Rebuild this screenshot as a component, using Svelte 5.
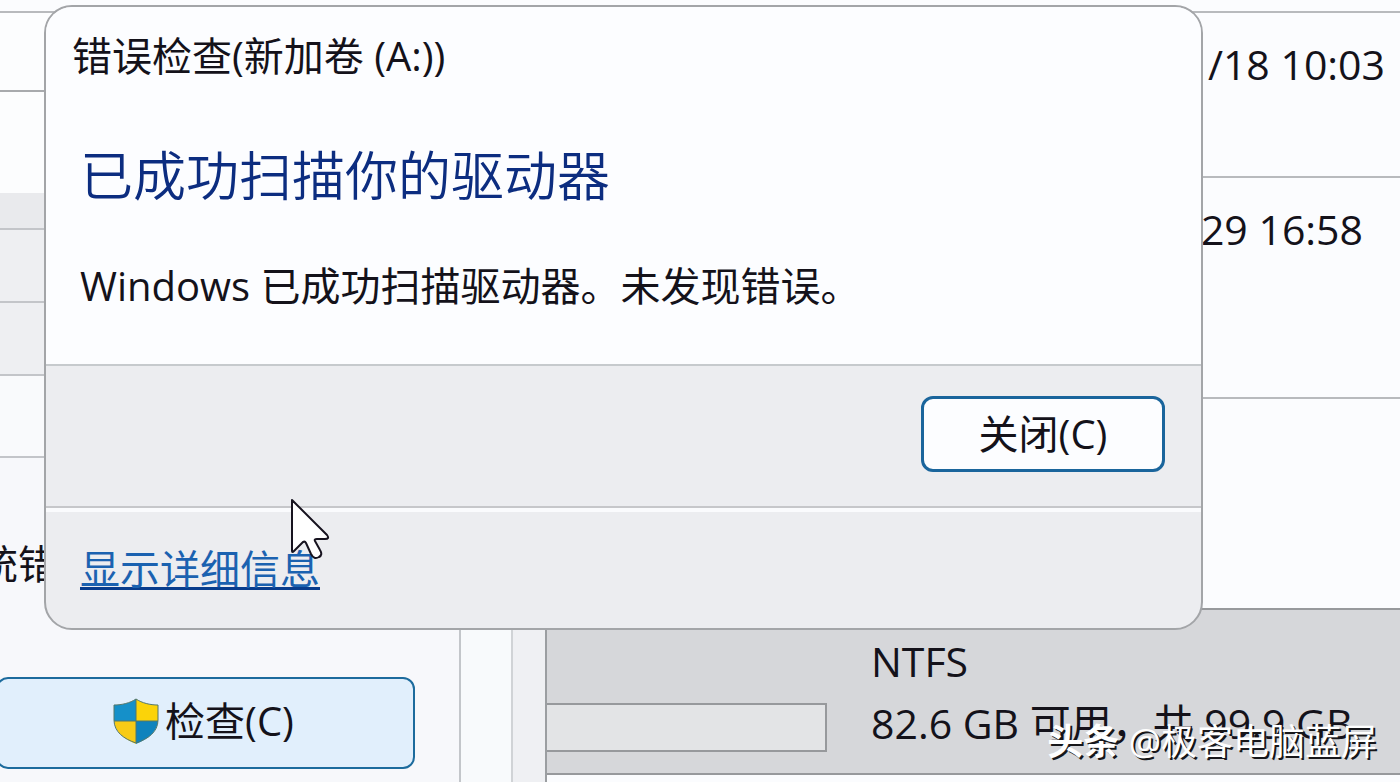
<script lang="ts">
  interface FileRow {
    modified: string;
    kind: string;
  }

  const files: FileRow[] = [
    { modified: '/18 10:03', kind: 'first' },
    { modified: '29 16:58', kind: 'second' },
  ];

  const bands = ['tabs', 'title', 'header', 'group', 'group', 'field'];

  let open = $state(true);
</script>

<main class="desktop">
  <div class="top-line"></div>
  <div class="windows">
    <section class="properties">
      <div class="page">
        {#each bands as band}
          <div class="band {band}"></div>
        {/each}
        <div class="check">
          <p>统错</p>
          <button type="button" class="check-button" onclick={() => (open = true)}>
            <svg class="shield" viewBox="0 0 46 46" aria-hidden="true">
              <path d="M23 1C17 5 9 7 1 7v16h22z" fill="#1590c9" />
              <path d="M23 1c6 4 14 6 22 6v16H23z" fill="#fbd309" />
              <path d="M1 23c1 11 10 18 22 23V23z" fill="#f8cb16" />
              <path d="M45 23c-1 11-10 18-22 23V23z" fill="#0f83bd" />
              <path
                d="M23 1C17 5 9 7 1 7v15c0 12 10 19 22 23 12-4 22-11 22-23V7C37 7 29 5 23 1zM23 1v44M1 23h44"
                fill="none"
                stroke="#53776a"
                stroke-width="1"
              />
            </svg>
            <span>检查(C)</span>
          </button>
        </div>
      </div>
      <div class="margin"></div>
      <div class="edge"></div>
    </section>

    <section class="explorer">
      {#each files as file}
        <div class="file {file.kind}">{file.modified}</div>
      {/each}
      <div class="blank"></div>
      <div class="drive">
        <div class="capacity"></div>
        <div class="info">
          <span>NTFS</span>
          <span>82.6 GB 可用，共 99.9 GB</span>
        </div>
      </div>
    </section>
  </div>

  {#if open}
    <div class="dialog" role="dialog" aria-labelledby="dialog-title">
      <div class="message">
        <div class="title" id="dialog-title">错误检查(新加卷 (A:))</div>
        <h1>已成功扫描你的驱动器</h1>
        <p>Windows 已成功扫描驱动器。未发现错误。</p>
      </div>
      <div class="actions">
        <button type="button" class="close" onclick={() => (open = false)}>关闭(C)</button>
      </div>
      <div class="details">
        <a href="#details">显示详细信息</a>
      </div>
    </div>
  {/if}

  <svg class="cursor" viewBox="0 0 40 62" aria-hidden="true">
    <path
      d="M2 2v51q0 2 2 0l9-9q2-1 3 1l5 11q3 6 8 3 4-2 1-7l-5-9q-1-2 2-2h8q5 0 2-4z"
      fill="#fff"
      stroke="#17131f"
      stroke-width="2"
      stroke-linejoin="round"
    />
  </svg>

  <div class="watermark"><b>头条</b> @极客电脑蓝屏</div>
</main>

<style>
  :global(body) {
    margin: 0;
  }

  .desktop {
    position: relative;
    display: flex;
    flex-direction: column;
    min-height: 100vh;
    overflow: hidden;
    background: #fbfcfe;
    color: #14121a;
    font-family: 'Open Sans', 'Noto Sans CJK SC', sans-serif;
    font-size: 40px;
    line-height: 52px;
  }

  .desktop *,
  .desktop {
    box-sizing: border-box;
  }

  p,
  h1 {
    margin: 0;
  }

  button {
    padding: 0;
    color: inherit;
    font-family: inherit;
    font-size: 40px;
    line-height: 52px;
  }

  .top-line {
    height: 13px;
    border-bottom: 2px solid #b8babd;
  }

  .windows {
    display: flex;
    flex: 1;
  }

  .properties {
    display: flex;
    flex: none;
    width: 545px;
  }

  .page {
    display: flex;
    flex: 1;
    flex-direction: column;
    border-right: 2px solid #c3c6ca;
    background: #f9fafc;
  }

  .band {
    flex: none;
    border-bottom: 2px solid #c3c5c9;
  }

  .tabs {
    height: 79px;
    border-color: #a8aaad;
    background: #fcfdfe;
  }

  .band.title {
    height: 101px;
    border: 0;
    background: #fcfdfe;
  }

  .header {
    height: 37px;
    background: #e9eaed;
  }

  .group {
    height: 73px;
    background: #eeeff2;
  }

  .field {
    height: 82px;
  }

  .check {
    flex: 1;
    padding-top: 80px;
    background: #f7f8fb;
  }

  .check p {
    margin-left: -22px;
  }

  .check-button {
    display: flex;
    align-items: center;
    justify-content: center;
    gap: 6px;
    width: 419px;
    height: 92px;
    margin: 87px 0 0 -4px;
    padding: 0 4px 4px 0;
    border: 2px solid #1c6b9d;
    border-radius: 12px;
    background: #e1effc;
  }

  .shield {
    width: 46px;
    height: 46px;
  }

  .margin {
    width: 52px;
    border-right: 2px solid #d0d3d6;
    background: #f8fafc;
  }

  .edge {
    width: 32px;
    background: #eff0f3;
  }

  .explorer {
    display: flex;
    flex: 1;
    flex-direction: column;
    border-left: 2px solid #9b9ea1;
    font-size: 41px;
  }

  .file {
    border-bottom: 2px solid #b8babd;
    text-align: right;
  }

  .first {
    height: 165px;
    padding: 25px 15px 0 0;
  }

  .second {
    height: 221px;
    padding: 25px 37px 0 0;
  }

  .blank {
    height: 209px;
  }

  .drive {
    display: flex;
    gap: 44px;
    height: 167px;
    border: solid #97999c;
    border-width: 2px 0;
    background: #d6d7da;
  }

  .capacity {
    width: 280px;
    height: 49px;
    margin-top: 93px;
    border: 2px solid #97999c;
    border-left: 0;
    background: #e3e4e6;
  }

  .info {
    display: flex;
    flex-direction: column;
    gap: 10px;
    padding-top: 25px;
    white-space: nowrap;
  }

  .dialog {
    position: absolute;
    top: 5px;
    right: 197px;
    left: 44px;
    overflow: hidden;
    border: 2px solid #a3a5a8;
    border-radius: 28px;
    background: #ecedf0;
  }

  .message {
    height: 359px;
    padding: 23px 34px 0;
    border-bottom: 2px solid #c6cacd;
    background: #fcfdff;
  }

  .dialog .title {
    margin-left: -8px;
  }

  h1 {
    margin-top: 60px;
    color: #0c2d80;
    font-size: 53px;
    font-weight: 350;
    line-height: 68px;
  }

  .message p {
    margin-top: 50px;
  }

  .actions {
    display: flex;
    justify-content: flex-end;
    padding: 30px 36px 34px;
    border-bottom: 2px solid #c6c7ca;
  }

  .close {
    width: 244px;
    height: 76px;
    border: 3px solid #1a659c;
    border-radius: 12px;
    background: #fcfdff;
  }

  .details {
    height: 120px;
    padding: 31px 34px 0;
    border-top: 4px solid #fafbfd;
  }

  a {
    color: #1b62b0;
    text-decoration: underline;
    text-decoration-color: #083c8c;
    text-decoration-thickness: 3px;
    text-underline-offset: 3px;
    text-decoration-skip-ink: none;
  }

  .cursor {
    position: absolute;
    top: 498px;
    left: 290px;
    width: 40px;
    height: 62px;
  }

  .watermark {
    position: absolute;
    right: 23px;
    bottom: 14px;
    color: #fff;
    font-size: 36px;
    text-shadow: 2px 2px 0 #17171a;
  }
</style>
